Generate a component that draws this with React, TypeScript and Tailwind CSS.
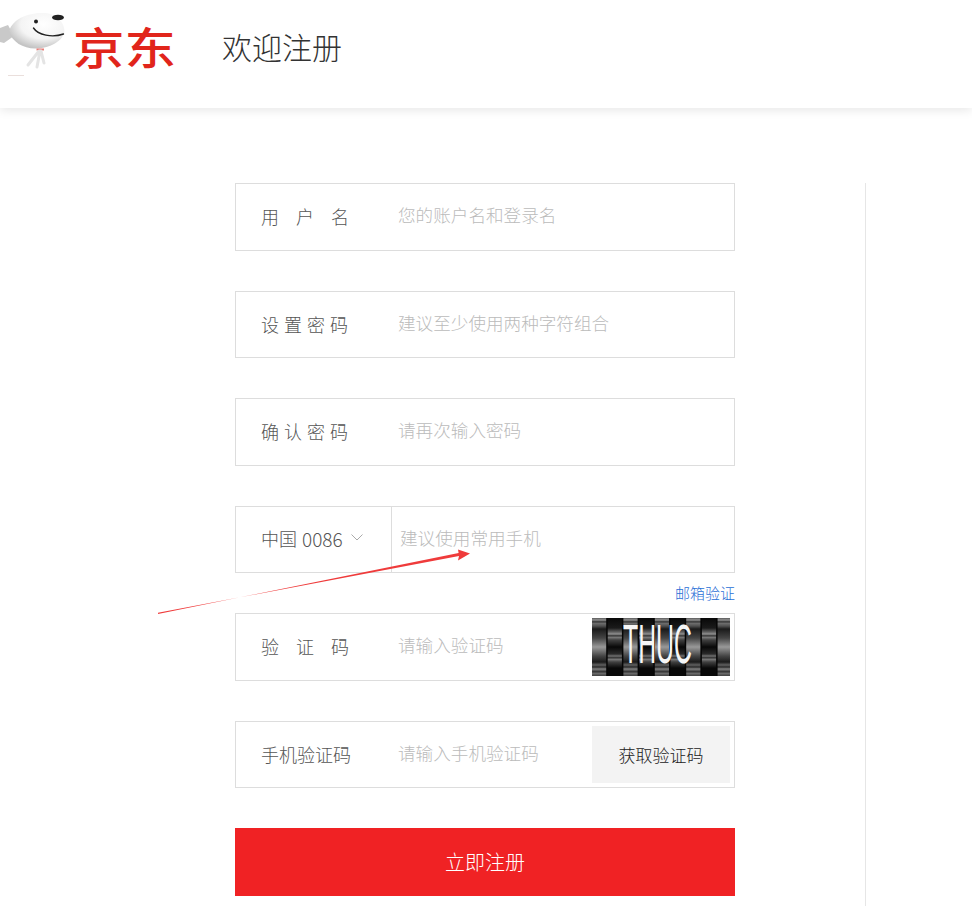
import React from "react";

const font = { fontFamily: '"Noto Sans CJK SC","Noto Sans",sans-serif' };

function Dog() {
  return (
    <svg width="73" height="76" viewBox="0 0 73 76" className="shrink-0">
      <defs>
        <radialGradient id="head" cx="62%" cy="32%" r="68%">
          <stop offset="0%" stopColor="#ffffff" />
          <stop offset="60%" stopColor="#f4f4f4" />
          <stop offset="100%" stopColor="#c4c4c4" />
        </radialGradient>
      </defs>
      <path d="M0 28 L8 25 L14 36 L4 43 L0 42 Z" fill="#c9c9c9" />
      <path d="M9 31 C13 18 30 12 45 13 C58 14 66 25 64 33 C61 43 47 48.5 35 48.5 C23 48.5 12 42 9 31 Z" fill="url(#head)" />
      <ellipse cx="58" cy="17.5" rx="6" ry="2.8" fill="#222222" />
      <circle cx="36" cy="21.5" r="2" fill="#222222" />
      <path d="M33.5 28 C38 35 52 38 63.5 34" fill="none" stroke="#222222" strokeWidth="1.4" strokeLinecap="round" />
      <path d="M36.5 49.5 L44 49.5" stroke="#e77d78" strokeWidth="2" />
      <path d="M39 51 L28 65 M40 51 L37 67 M41 51 L44 63" stroke="#e4e4e4" strokeWidth="3" strokeLinecap="round" fill="none" />
      <path d="M8 75.5 H24" stroke="#eadfdc" strokeWidth="1" />
    </svg>
  );
}

const EVEN: [number, string][] = [
  [0, "#5a5a5a"], [2, "#909090"], [4, "#2a2a2a"], [5, "#707070"], [8, "#505050"], [11, "#1a1a1a"], [20, "#444"], [29, "#999"],
  [38, "#444"], [44, "#1a1a1a"], [47, "#606060"], [49, "#2a2a2a"], [51, "#808080"], [54, "#2a2a2a"], [55, "#707070"], [58, "#404040"],
];
const ODD: [number, string][] = [
  [0, "#080808"], [10, "#1a1a1a"], [14, "#606060"], [16, "#909090"], [18, "#2a2a2a"], [19, "#808080"], [22, "#404040"], [29, "#080808"],
  [36, "#2a2a2a"], [38, "#707070"], [40, "#2a2a2a"], [41, "#808080"], [44, "#404040"], [50, "#080808"], [58, "#080808"],
];

function Captcha() {
  const cols = Array.from({ length: 9 }, (_, i) => i);
  return (
    <svg width="138" height="58" viewBox="0 0 138 58" className="block">
      <defs>
        <linearGradient id="even" x1="0" y1="0" x2="0" y2="1">
          {EVEN.map(([o, c]) => (
            <stop key={o} offset={o / 58} stopColor={c} />
          ))}
        </linearGradient>
        <linearGradient id="odd" x1="0" y1="0" x2="0" y2="1">
          {ODD.map(([o, c]) => (
            <stop key={o} offset={o / 58} stopColor={c} />
          ))}
        </linearGradient>
      </defs>
      <rect width="138" height="58" fill="#050505" />
      {cols.map((c) => (
        <rect key={c} x={c * 15.7} y="0" width="14.2" height="58" fill={c % 2 === 0 ? "url(#even)" : "url(#odd)"} />
      ))}
      <text
        transform="translate(31 45) scale(0.69 1.55)"
        fill="#f6f6f6"
        fontSize="36"
        fontFamily="Liberation Sans, sans-serif"
      >
        THUC
      </text>
    </svg>
  );
}

function Row({ label, placeholder, right }: { label: React.ReactNode; placeholder: string; right?: React.ReactNode }) {
  return (
    <div className="flex h-[67.5px] w-[500px] items-center border border-[#dddddd] pl-[25px] pr-1">
      <div className="w-[137px] shrink-0 text-[18px] font-light text-[#555555]">{label}</div>
      <div className="-mt-[3px] flex-1 text-[17.6px] font-light text-[#bbbbbb]">{placeholder}</div>
      {right}
    </div>
  );
}

export default function App() {
  return (
    <div className="relative h-[906px] w-[972px] overflow-hidden bg-white" style={font}>
      <header className="flex h-[108px] shadow-[0_2px_10px_rgba(0,0,0,0.10)]">
        <div className="flex w-[222px] items-start">
          <Dog />
          <div className="mt-[13px] origin-left scale-x-[1.17] text-[44px] leading-[66px] font-medium text-[#e1251b]">京东</div>
        </div>
        <h1 className="mt-[24px] text-[30px] leading-[44px] font-light text-[#333333]">欢迎注册</h1>
      </header>

      <main className="flex pt-[75px] pl-[235px]">
        <form className="flex w-[500px] flex-col gap-[40px]">
          <Row label={<span className="tracking-[17px]">用户名</span>} placeholder="您的账户名和登录名" />
          <Row label={<span className="tracking-[5px]">设置密码</span>} placeholder="建议至少使用两种字符组合" />
          <Row label={<span className="tracking-[5px]">确认密码</span>} placeholder="请再次输入密码" />
          <div className="relative">
            <div className="flex h-[67.5px] w-[500px] items-center border border-[#dddddd] pl-[25px]">
              <div className="-mt-px flex h-full w-[131px] shrink-0 items-center border-r border-[#dddddd] text-[18px] font-light text-[#555555]">
                中国 <span className="ml-[5px] text-[19px]">0086</span>
                <svg width="12" height="7" viewBox="0 0 12 7" className="mb-[3px] ml-[8px]">
                  <path d="M0.5 0.5 L6 6 L11.5 0.5" fill="none" stroke="#aaaaaa" strokeWidth="1" />
                </svg>
              </div>
              <div className="-mt-[3px] pl-[8px] text-[17.6px] font-light text-[#bbbbbb]">建议使用常用手机</div>
            </div>
            <a className="absolute top-[77px] right-0 text-[15px] leading-[20px] font-light text-[#2a6fd6]">邮箱验证</a>
          </div>
          <Row label={<span className="tracking-[17px]">验证码</span>} placeholder="请输入验证码" right={<Captcha />} />
          <Row
            label="手机验证码"
            placeholder="请输入手机验证码"
            right={
              <div className="flex h-[57px] w-[138px] items-center justify-center bg-[#f3f3f3] text-[17px] font-light text-[#222222]">
                获取验证码
              </div>
            }
          />
          <button type="button" className="h-[68px] w-[500px] bg-[#f02224] text-[20px] font-light text-white">
            立即注册
          </button>
        </form>
        <div className="ml-[130px] h-[760px] w-px bg-[#e6e6e6]" />
      </main>

      <svg className="pointer-events-none absolute top-0 left-0" width="972" height="906" viewBox="0 0 972 906">
        <path d="M158 612.8 L459 556 L458 560.5 L470 553.5 L458 549.5 L458.6 553 L158 614 Z" fill="#ef3b3b" />
      </svg>
    </div>
  );
}
